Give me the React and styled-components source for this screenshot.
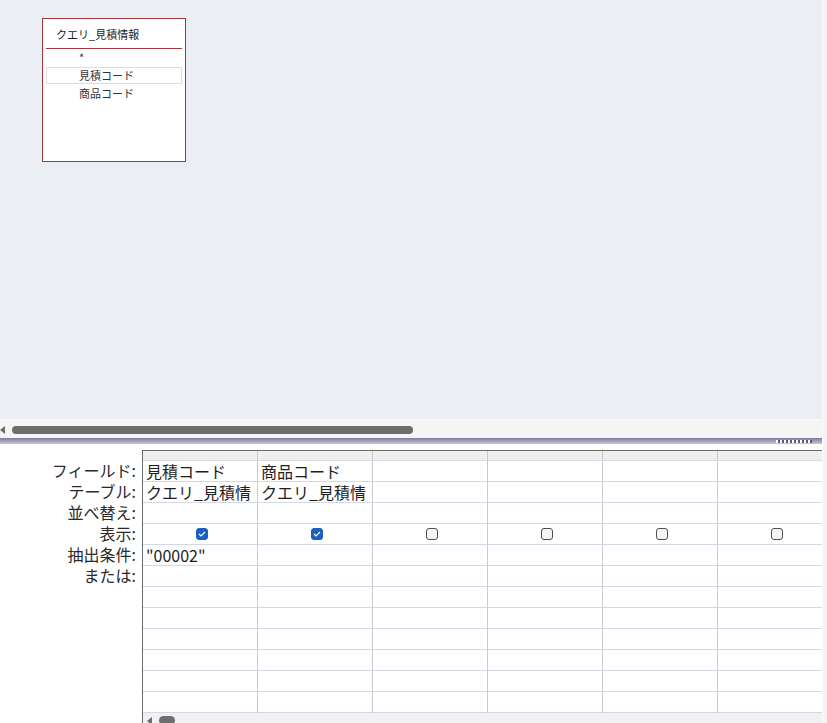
import React from 'react';
import styled, { createGlobalStyle } from 'styled-components';

const GlobalStyle = createGlobalStyle`
  html, body {
    margin: 0;
    padding: 0;
    background: #ffffff;
  }
  body {
    font-family: "Noto Sans CJK JP", "Noto Sans", sans-serif;
    color: #1e1e1e;
  }
`;

const Page = styled.div`
  display: flex;
  width: 827px;
  height: 723px;
  overflow: hidden;
`;

const Main = styled.div`
  width: 822px;
  display: flex;
  flex-direction: column;
`;

const SideStrip = styled.div`
  width: 5px;
  background: #f4f4f4;
  border-left: 1px solid #fafafa;
`;

// upper pane: the table canvas
const Canvas = styled.div`
  height: 419px;
  background: #ebeef2;
  padding: 18px 0 0 42px;
  box-sizing: border-box;
`;

const TableBox = styled.div`
  width: 144px;
  height: 144px;
  box-sizing: border-box;
  background: #ffffff;
  border: 1px solid #a0373a;
  padding: 0 3px;
`;

const TableTitle = styled.div`
  font-size: 11px;
  line-height: 14px;
  padding: 8px 0 7px 10px;
  border-bottom: 1px solid #a0373a;
  color: #222222;
`;

const FieldItem = styled.div`
  font-size: 11px;
  line-height: 15px;
  height: 17px;
  padding-left: 32px;
  margin-bottom: 1px;
  box-sizing: border-box;
  color: #333333;
  border: 1px solid ${p => (p.$selected ? '#f1d3d3' : 'transparent')};
`;

const HScroll = styled.div`
  height: 19px;
  background: #f5f5f5;
  border-top: 1px solid #fbfbfb;
  box-sizing: border-box;
  display: flex;
  align-items: center;
  gap: 7px;
  padding-top: 1px;
`;

const ArrowLeft = styled.div`
  width: 0;
  height: 0;
  border-top: ${p => p.$s}px solid transparent;
  border-bottom: ${p => p.$s}px solid transparent;
  border-right: ${p => p.$s + 1}px solid #6b6b6b;
`;

const Thumb = styled.div`
  width: ${p => p.$w}px;
  height: ${p => p.$h}px;
  border-radius: ${p => p.$h / 2}px;
  background: #6e6e6e;
`;

const Splitter = styled.div`
  height: 6px;
  background: linear-gradient(#7c7a9b, #a9a7c0 60%, #c9c8d6);
  display: flex;
  justify-content: flex-end;
  align-items: center;
  padding-right: 10px;
`;

const Grip = styled.div`
  width: 36px;
  height: 3px;
  background: repeating-linear-gradient(90deg, #ffffff 0 2px, #5a5878 2px 4px);
`;

// lower pane: the design grid
const GridPane = styled.div`
  flex: 1;
  display: flex;
  background: #ffffff;
  min-height: 0;
`;

const Labels = styled.div`
  width: 142px;
  padding-top: 16px;
  box-sizing: border-box;
  padding-right: 6px;
`;

const Label = styled.div`
  height: 21px;
  line-height: 21px;
  font-size: 16px;
  text-align: right;
  white-space: nowrap;
  color: #2a2a2a;
`;

const GridFrame = styled.div`
  flex: 1;
  margin-top: 6px;
  border-left: 1px solid #6a6a6a;
  border-top: 1px solid #6a6a6a;
  display: flex;
  flex-direction: column;
  overflow: hidden;
  min-width: 0;
`;

const GridRows = styled.div`
  display: grid;
  grid-template-columns: repeat(6, 115px);
`;

const HeadCell = styled.div`
  height: 9px;
  background: #efefef;
  border-right: 1px solid #c9c9c9;
  border-bottom: 1px solid #d6dce6;
`;

const Cell = styled.div`
  height: 20px;
  line-height: 20px;
  font-size: 16px;
  padding-left: 3px;
  border-right: 1px solid #c6cad2;
  border-bottom: 1px solid #d3d9e4;
  white-space: nowrap;
  overflow: hidden;
  display: flex;
  align-items: center;
  justify-content: ${p => (p.$center ? 'center' : 'flex-start')};
  color: #1e1e1e;
`;

const Check = styled.div`
  width: 12px;
  height: 12px;
  box-sizing: border-box;
  border-radius: 3px;
  background: ${p => (p.$on ? '#1b5fc0' : '#f5f5f5')};
  border: 1px solid ${p => (p.$on ? '#1b5fc0' : '#4f4f4f')};
  display: flex;
  align-items: center;
  justify-content: center;
`;

const GridScroll = styled.div`
  height: 17px;
  flex-shrink: 0;
  background: #f1f1f1;
  display: flex;
  align-items: center;
  gap: 7px;
  padding-left: 4px;
  padding-bottom: 2px;
  box-sizing: border-box;
  margin-top: auto;
`;

const labels = ['フィールド:', 'テーブル:', '並べ替え:', '表示:', '抽出条件:', 'または:'];

const columns = [
  { field: '見積コード', table: 'クエリ_見積情', show: true, criteria: '"00002"' },
  { field: '商品コード', table: 'クエリ_見積情', show: true, criteria: '' },
  { field: '', table: '', show: false, criteria: '' },
  { field: '', table: '', show: false, criteria: '' },
  { field: '', table: '', show: false, criteria: '' },
  { field: '', table: '', show: false, criteria: '' },
];

const TOTAL_ROWS = 12;

const CheckBox = ({ on }) => (
  <Check $on={on}>
    {on && (
      <svg width="8" height="6" viewBox="0 0 8 6">
        <path d="M1 3 L3 5 L7 1" fill="none" stroke="#ffffff" strokeWidth="1.2" />
      </svg>
    )}
  </Check>
);

const renderCell = (col, row) => {
  if (row === 0) return col.field;
  if (row === 1) return col.table;
  if (row === 3) return <CheckBox on={col.show} />;
  if (row === 4) return col.criteria;
  return null;
};

const App = () => {
  const rows = Array.from({ length: TOTAL_ROWS }, (_, i) => i);

  return (
    <>
      <GlobalStyle />
      <Page>
        <Main>
          <Canvas>
            <TableBox>
              <TableTitle>クエリ_見積情報</TableTitle>
              <div>
                <FieldItem>*</FieldItem>
                <FieldItem $selected>見積コード</FieldItem>
                <FieldItem>商品コード</FieldItem>
              </div>
            </TableBox>
          </Canvas>

          <HScroll>
            <ArrowLeft $s={4} />
            <Thumb $w={401} $h={8} />
          </HScroll>

          <Splitter>
            <Grip />
          </Splitter>

          <GridPane>
            <Labels>
              {labels.map(l => (
                <Label key={l}>{l}</Label>
              ))}
            </Labels>
            <GridFrame>
              <GridRows>
                {columns.map((_, i) => (
                  <HeadCell key={'h' + i} />
                ))}
                {rows.map(r =>
                  columns.map((col, c) => (
                    <Cell key={r + '-' + c} $center={r === 3}>
                      {renderCell(col, r)}
                    </Cell>
                  ))
                )}
              </GridRows>
              <GridScroll>
                <ArrowLeft $s={4} />
                <Thumb $w={16} $h={9} />
              </GridScroll>
            </GridFrame>
          </GridPane>
        </Main>
        <SideStrip />
      </Page>
    </>
  );
};

export default App;
